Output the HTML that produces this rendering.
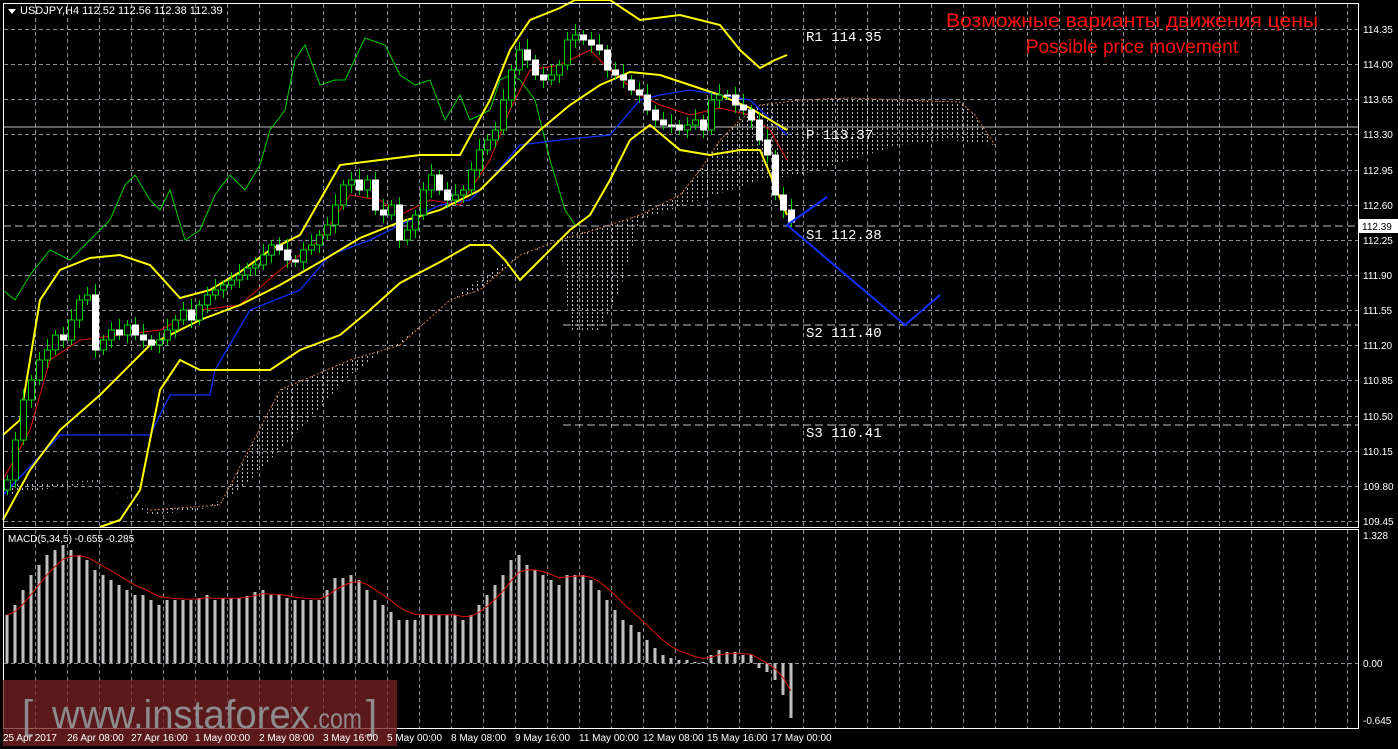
<!DOCTYPE html>
<html><head><meta charset="utf-8"><style>
html,body{margin:0;padding:0;background:#000;width:1398px;height:749px;overflow:hidden}
svg{display:block}
text{font-family:"Liberation Sans",sans-serif}
text.m{font-family:"Liberation Mono",monospace}
</style></head><body>
<svg id="s" width="1398" height="749" xmlns="http://www.w3.org/2000/svg">
<defs>
<pattern id="cl" width="5" height="4" patternUnits="userSpaceOnUse"><rect x="2" y="0" width="1" height="2" fill="#d8d8d8"/></pattern>
</defs>
<rect width="1398" height="749" fill="#000"/>
<g id="grid" stroke="#8a8f9a" stroke-dasharray="4,3" stroke-width="1"></g>
<polygon fill="url(#cl)" opacity="0.85" points="3,485 100,480 150,515 200,510 240,490 300,430 350,375 400,340 450,300 500,265 550,245 570,232 600,228 640,215 680,195 700,170 720,140 740,120 760,105 800,100 850,98 900,100 960,102 975,115 995,145 950,140 900,145 850,160 800,175 760,180 700,200 640,220 620,290 600,330 570,330 560,240 520,255 480,290 450,300 400,345 350,360 280,390 220,505 150,510 100,482 3,495"/>
<polyline fill="none" stroke="#c87a50" stroke-width="1" stroke-dasharray="2,2" points="150,510 220,505 280,390 350,360 400,345 450,300 480,290 520,255 560,240 600,228 640,215 680,195 700,170 720,140 740,120 760,105 800,100 850,98 900,100 960,102 975,115 995,145"/>
<line x1="3" y1="127" x2="1358" y2="127" stroke="#c0c0c0"/>
<line x1="3" y1="226" x2="1358" y2="226" stroke="#c0c0c0" stroke-dasharray="8,4"/>
<line x1="563" y1="325" x2="1358" y2="325" stroke="#c0c0c0" stroke-dasharray="8,4"/>
<line x1="563" y1="425" x2="1358" y2="425" stroke="#c0c0c0" stroke-dasharray="8,4"/>
<polyline fill="none" stroke="#00d000" stroke-width="1" points="3,290 15,300 30,275 50,250 70,260 90,240 110,220 125,185 135,175 150,200 160,210 170,190 185,240 200,230 215,195 230,175 245,190 260,165 270,130 285,110 295,60 305,45 320,85 335,80 345,80 365,38 385,45 400,75 415,85 430,80 445,120 460,95 470,120 490,110 500,80 510,75 520,80 535,100 550,160 565,210 575,225 580,225"/>
<polyline fill="none" stroke="#1030ff" stroke-width="1.3" points="3,495 60,435 150,435 170,395 210,395 215,370 250,310 300,290 330,255 370,240 400,225 440,205 470,200 490,180 520,145 560,140 610,135 640,100 660,95 690,90 720,95 750,100 787,135"/>
<polyline fill="none" stroke="#e01010" stroke-width="1" points="3,480 30,430 50,360 80,340 120,335 160,330 200,310 240,305 280,270 320,240 350,195 380,200 400,215 430,200 460,205 490,160 510,110 530,70 560,65 590,50 610,70 640,95 660,105 690,115 720,108 750,115 770,130 787,160"/>
<g fill="none" stroke="#ffff00" stroke-width="2">
<polyline points="3,435 20,420 40,300 60,270 90,258 120,255 150,265 180,298 210,290 240,272 270,250 300,235 320,200 340,165 380,160 420,155 460,155 490,100 510,50 530,20 560,8 575,0 610,0 640,20 680,15 720,25 740,50 760,68 775,60 787,55"/>
<polyline points="3,520 30,470 60,430 100,395 150,345 200,320 240,305 280,285 320,262 360,238 400,222 440,210 480,190 510,160 540,130 570,105 600,85 630,72 660,75 690,85 720,95 750,108 787,130"/>
<polyline points="100,527 120,520 140,490 160,390 180,360 200,370 230,370 270,370 300,350 340,335 370,310 400,283 440,262 470,245 490,245 505,260 520,280 540,260 570,230 590,215 610,180 630,140 650,125 680,150 710,155 740,150 760,150 787,215"/>
</g>
<g id="candles"></g>
<polyline fill="none" stroke="#1030ff" stroke-width="2" points="827,197 787,225 905,325 940,295"/>
<g fill="#fff" font-size="14">
<text class="m" x="806" y="41">R1  114.35</text>
<text class="m" x="806" y="139">  P 113.37</text>
<text class="m" x="806" y="239">S1  112.38</text>
<text class="m" x="806" y="337">S2  111.40</text>
<text class="m" x="806" y="437">S3  110.41</text>
</g>
<g fill="#ff1010" font-size="19" text-anchor="middle">
<text x="1132" y="27" textLength="372" lengthAdjust="spacingAndGlyphs">Возможные варианты движения цены</text>
<text x="1132" y="53">Possible price movement</text>
</g>
<g id="macd"></g>
<polyline id="sig" fill="none" stroke="#e01010" stroke-width="1"/>
<rect x="3.5" y="3.5" width="1355" height="524" fill="none" stroke="#fff"/>
<rect x="3.5" y="529.5" width="1355" height="199" fill="none" stroke="#fff"/>
<g id="ax" fill="#fff" font-size="10"></g>
<rect x="1359" y="219" width="39" height="14" fill="#fff"/>
<text x="1362" y="230" font-size="10" fill="#000">112.39</text>
<g fill="#fff" font-size="11">
<path d="M8,9 L16,9 L12,14Z"/>
<text x="20" y="14">USDJPY,H4  112.52 112.56 112.38 112.39</text>
<text x="8" y="542" font-size="10">MACD(5,34,5) -0.655 -0.285</text>
</g>
<rect x="3" y="680" width="394" height="66" fill="#7a2226" opacity="0.75"/>
<g fill="#8c8c8c">
<text x="22" y="728" font-size="40">[</text>
<text x="52" y="728" font-size="40" textLength="258" lengthAdjust="spacingAndGlyphs">www.instaforex</text>
<text x="312" y="728" font-size="28" textLength="50" lengthAdjust="spacingAndGlyphs">.com</text>
<text x="366" y="728" font-size="40">]</text>
</g>
<g fill="#fff" font-size="10" id="tl">
<text x="3" y="741">25 Apr 2017</text><text x="67" y="741">26 Apr 08:00</text><text x="131" y="741">27 Apr 16:00</text><text x="195" y="741">1 May 00:00</text><text x="259" y="741">2 May 08:00</text><text x="323" y="741">3 May 16:00</text><text x="387" y="741">5 May 00:00</text><text x="451" y="741">8 May 08:00</text><text x="515" y="741">9 May 16:00</text><text x="579" y="741">11 May 00:00</text><text x="643" y="741">12 May 08:00</text><text x="707" y="741">15 May 16:00</text><text x="771" y="741">17 May 00:00</text>
</g>
</svg>
<script>
var NS="http://www.w3.org/2000/svg",g=document.getElementById('grid');
function el(p,t,a){var e=document.createElementNS(NS,t);for(var k in a)e.setAttribute(k,a[k]);p.appendChild(e);return e;}
for(var x=35;x<1358;x+=32){el(g,'line',{x1:x+.5,y1:4,x2:x+.5,y2:527});el(g,'line',{x1:x+.5,y1:530,x2:x+.5,y2:728});}
var labs=["114.35","114.00","113.65","113.30","112.95","112.60","112.25","111.90","111.55","111.20","110.85","110.50","110.15","109.80","109.45"];
var ax=document.getElementById('ax');
for(var i=0;i<15;i++){var y=Math.round(29+i*35.14);el(g,'line',{x1:4,y1:y+.5,x2:1358,y2:y+.5});var t=el(ax,'text',{x:1363,y:y+4});t.textContent=labs[i];}
el(g,'line',{x1:4,y1:663.5,x2:1358,y2:663.5});
[["1.328",539],["0.00",667],["-0.645",724]].forEach(function(a){var t=el(ax,'text',{x:1363,y:a[1]});t.textContent=a[0];});
var C=[480,440,400,380,360,350,335,340,320,300,295,350,340,330,335,325,335,340,345,340,330,320,310,320,305,295,290,285,280,275,268,265,255,245,250,260,262,250,245,235,225,205,185,180,190,180,210,215,205,240,230,215,190,175,190,200,195,190,170,150,140,130,100,70,50,60,75,80,75,65,40,35,40,45,50,70,75,80,90,95,110,120,125,125,130,125,120,130,100,95,95,105,110,120,140,155,195,210,222];
var cg=document.getElementById('candles'),o=490;
for(var i=0;i<C.length;i++){var x=7+8*i,c=C[i],hi=Math.min(o,c)-5-(i%3)*3,lo=Math.max(o,c)+5+(i%2)*3;
el(cg,'line',{x1:x+.5,y1:hi,x2:x+.5,y2:lo,stroke:'#00d000'});
if(c<o)el(cg,'rect',{x:x-2.5,y:c,width:6,height:Math.max(1,o-c),fill:'#000',stroke:'#00d000'});
else el(cg,'rect',{x:x-2.5,y:o,width:6,height:Math.max(1,c-o),fill:'#fff',stroke:'#fff'});
o=c;}
var M=[615,605,590,575,565,555,550,545,550,555,560,570,575,580,585,590,595,595,600,605,600,600,600,600,598,595,600,598,598,598,596,592,590,595,595,598,600,600,600,600,590,578,578,575,580,590,600,605,612,620,620,620,615,615,615,615,615,620,615,605,595,585,575,560,555,565,570,575,580,585,575,575,575,580,590,600,610,620,625,632,640,648,655,658,660,660,662,662,655,650,652,652,655,655,668,672,680,695,718];
var mg=document.getElementById('macd'),pts=[],s=M[0];
for(var i=0;i<M.length;i++){var x=7+8*i,y=M[i];el(mg,'rect',{x:x-1.5,y:Math.min(y,663),width:3,height:Math.max(1,Math.abs(663-y)),fill:'#c0c0c0'});s=s+(y-s)/3;pts.push(x+','+s.toFixed(1));}
document.getElementById('sig').setAttribute('points',pts.join(' '));
</script>
</body></html>
